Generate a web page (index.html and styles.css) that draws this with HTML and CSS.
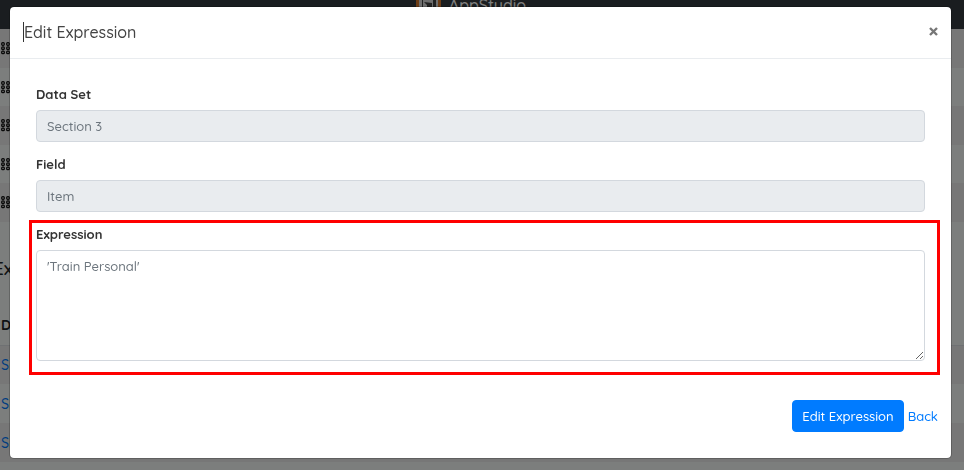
FILE: index.html
```
<!DOCTYPE html>
<html lang="en">
<head>
    <meta charset="UTF-8">
    <meta name="viewport" content="width=device-width, initial-scale=1.0">
    <title>AppStudio - Edit Expression</title>
    <link rel="stylesheet" href="styles.css">
</head>
<body>
    <svg class="sprite" aria-hidden="true">
        <symbol id="grip" viewBox="0 0 10 13">
            <g fill="none" stroke="#111" stroke-width="1.3">
                <rect x="0.7" y="0.7" width="2.6" height="2.6" rx="1"/>
                <rect x="5.7" y="0.7" width="2.6" height="2.6" rx="1"/>
                <rect x="0.7" y="4.9" width="2.6" height="2.6" rx="1"/>
                <rect x="5.7" y="4.9" width="2.6" height="2.6" rx="1"/>
                <rect x="0.7" y="9.1" width="2.6" height="2.6" rx="1"/>
                <rect x="5.7" y="9.1" width="2.6" height="2.6" rx="1"/>
            </g>
        </symbol>
    </svg>

    <div class="page">
        <nav class="navbar">
            <a class="brand" href="#">
                <svg width="25" height="25" viewBox="0 0 25 25" aria-hidden="true">
                    <rect width="25" height="25" fill="#d9792b"/>
                    <path d="M3 2h19v21H3z" fill="#dcdcdc"/>
                    <path d="M6 9h1v11H6zM8 11l8 1v5H11v-3zM17 9h3v11h-3z" fill="#444"/>
                </svg>
                <span>AppStudio</span>
            </a>
        </nav>
        <ul class="rows">
            <li><svg class="grip"><use href="#grip"/></svg></li>
            <li><svg class="grip"><use href="#grip"/></svg></li>
            <li><svg class="grip"><use href="#grip"/></svg></li>
            <li><svg class="grip"><use href="#grip"/></svg></li>
            <li><svg class="grip"><use href="#grip"/></svg></li>
        </ul>
        <h2 class="page-heading">Ex</h2>
        <table class="data">
            <thead>
                <tr><th>D</th></tr>
            </thead>
            <tbody>
                <tr><td><a href="#">S</a></td></tr>
                <tr><td><a href="#">S</a></td></tr>
                <tr><td><a href="#">S</a></td></tr>
            </tbody>
        </table>
    </div>

    <div class="backdrop">
        <div class="modal" role="dialog" aria-labelledby="modal-title">
            <div class="modal-header">
                <h1 class="modal-title" id="modal-title">Edit Expression</h1>
                <button type="button" class="close" aria-label="Close">
                    <svg width="9" height="9" viewBox="0 0 9 9"><path d="M1 1l7 7M8 1L1 8" stroke="#777" stroke-width="2.4"/></svg>
                </button>
            </div>
            <form class="modal-body">
                <div class="form-group">
                    <label for="dataset">Data Set</label>
                    <input type="text" id="dataset" class="form-control" value="Section 3" disabled>
                </div>
                <div class="form-group">
                    <label for="field">Field</label>
                    <input type="text" id="field" class="form-control" value="Item" disabled>
                </div>
                <div class="form-group highlight">
                    <label for="expression">Expression</label>
                    <textarea id="expression" class="form-control">'Train Personal'</textarea>
                </div>
                <div class="actions">
                    <button type="button" class="btn">Edit Expression</button>
                    <a href="#">Back</a>
                </div>
            </form>
        </div>
    </div>
</body>
</html>
```

FILE: styles.css
```
* {
    margin: 0;
    padding: 0;
    box-sizing: border-box;
}

body {
    font-family: Quicksand, Lato, sans-serif;
    font-size: 13px;
    font-weight: 500;
    color: #212529;
    background-color: #f8fcfa;
    overflow: hidden;
}

a {
    color: #007bff;
    text-decoration: none;
}

.sprite {
    display: none;
}

/* Page behind the dialog, scrolled down a little */
.page {
    margin-top: -19px;
}

.navbar {
    display: flex;
    justify-content: center;
    height: 48px;
    padding-top: 10px;
    background-color: #343a40;
}

.brand {
    display: flex;
    gap: 8px;
    height: 28px;
    margin-right: 22px;
    font-size: 16px;
    line-height: 28px;
    color: #fff;
}

.rows {
    list-style: none;
}

.rows li {
    display: flex;
    align-items: center;
    height: 39px;
    padding-left: 1px;
}

.rows li:nth-child(even) {
    height: 38px;
}

.rows li:nth-child(odd),
.data tbody tr:nth-child(odd) {
    background-color: #eee;
}

.grip {
    width: 10px;
    height: 13px;
}

.page-heading {
    padding: 34px 0 33px;
    margin-left: -7px;
    font-size: 19px;
    font-weight: 500;
    line-height: 24px;
}

.data {
    width: 100%;
    border-collapse: collapse;
}

.data th,
.data td {
    height: 39px;
    padding-left: 1px;
    font-size: 14px;
    text-align: left;
}

.data thead th {
    height: 32px;
    padding-bottom: 8px;
    border-bottom: 1px solid #dee2e6;
}

.backdrop {
    position: fixed;
    inset: 0;
    padding: 6px 12px 12px 9px;
    background-color: rgba(0, 0, 0, 0.5);
}

.modal {
    background-color: #fff;
    background-clip: padding-box;
    border: 1px solid rgba(0, 0, 0, 0.2);
    border-radius: 5px;
}

.modal-header {
    display: flex;
    align-items: center;
    justify-content: space-between;
    height: 52px;
    padding: 0 13px 2px;
    border-bottom: 1px solid #e9ecef;
}

.modal-title {
    border-left: 1px solid #333;
    font-size: 16px;
    font-weight: 500;
    line-height: 20px;
    color: #444;
}

.close {
    display: flex;
    border: none;
    background: none;
    cursor: pointer;
}

.modal-body {
    padding: 27px 11px 26px 19px;
}

.form-group {
    padding: 0 15px 0 7px;
    margin-bottom: 14px;
}

.form-group label {
    display: block;
    margin-bottom: 8px;
    font-weight: 700;
    line-height: 16px;
    color: #333;
}

.form-control {
    display: block;
    width: 100%;
    height: 32px;
    padding: 5px 10px;
    border: 1px solid #d3d8de;
    border-radius: 4px;
    background-color: #fff;
    font-family: inherit;
    font-size: 13px;
    font-weight: 500;
    line-height: 20px;
    color: #6c757d;
}

.form-control:disabled {
    background-color: #e9ecef;
}

textarea.form-control {
    height: 111px;
    resize: vertical;
}

.highlight {
    padding: 3px 12px 11px 4px;
    margin: -6px 0 25px;
    border: 3px solid #f00;
}

.actions {
    display: flex;
    align-items: center;
    justify-content: flex-end;
    gap: 4px;
    padding-right: 2px;
}

.btn {
    height: 32px;
    padding: 0 9px;
    border: 1px solid #007bff;
    border-radius: 4px;
    background-color: #007bff;
    font-family: inherit;
    font-size: 13px;
    font-weight: 500;
    color: #fff;
    cursor: pointer;
}
```
